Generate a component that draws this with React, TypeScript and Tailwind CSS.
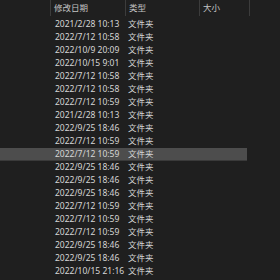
import React from 'react';

const rows = [
  '2021/2/28 10:13',
  '2022/7/12 10:58',
  '2022/10/9 20:09',
  '2022/10/15 9:01',
  '2022/7/12 10:58',
  '2022/7/12 10:58',
  '2022/7/12 10:59',
  '2021/2/28 10:13',
  '2022/9/25 18:46',
  '2022/7/12 10:59',
  '2022/7/12 10:59',
  '2022/9/25 18:46',
  '2022/9/25 18:46',
  '2022/9/25 18:46',
  '2022/7/12 10:59',
  '2022/7/12 10:59',
  '2022/7/12 10:59',
  '2022/9/25 18:46',
  '2022/9/25 18:46',
  '2022/10/15 21:16',
];

const selected = 10;

export default function App() {
  return (
    <div
      className="w-[280px] h-[280px] overflow-hidden bg-[#1f1f1f] text-[8.5px] leading-none text-[#d6d6d6]"
      style={{ fontFamily: '"Noto Sans", "Noto Sans CJK SC", sans-serif' }}
    >
      {/* column headers */}
      <div className="flex h-[18px] text-[#c4c4c4]">
        <div className="w-[51px] border-r border-[#3c3c3c] h-[16px]" />
        <div className="w-[75px] border-r border-[#3c3c3c] h-[16px] pl-[3px] flex items-center">修改日期</div>
        <div className="w-[74px] border-r border-[#3c3c3c] h-[16px] pl-[3px] flex items-center">类型</div>
        <div className="w-[50px] border-r border-[#3c3c3c] h-[16px] pl-[3px] flex items-center">大小</div>
      </div>

      {/* rows */}
      <div className="flex flex-col">
        {rows.map((date, i) => (
          <div
            key={i}
            className={
              i === selected
                ? 'flex items-center h-[13px] w-[247px] bg-[#4d4d4d] border-b border-[#3a3a3a]'
                : 'flex items-center h-[13px] w-[247px]'
            }
          >
            <div className="w-[55px] shrink-0" />
            <div className="w-[73px] shrink-0 whitespace-nowrap">{date}</div>
            <div className="whitespace-nowrap">文件夹</div>
          </div>
        ))}
      </div>
    </div>
  );
}
